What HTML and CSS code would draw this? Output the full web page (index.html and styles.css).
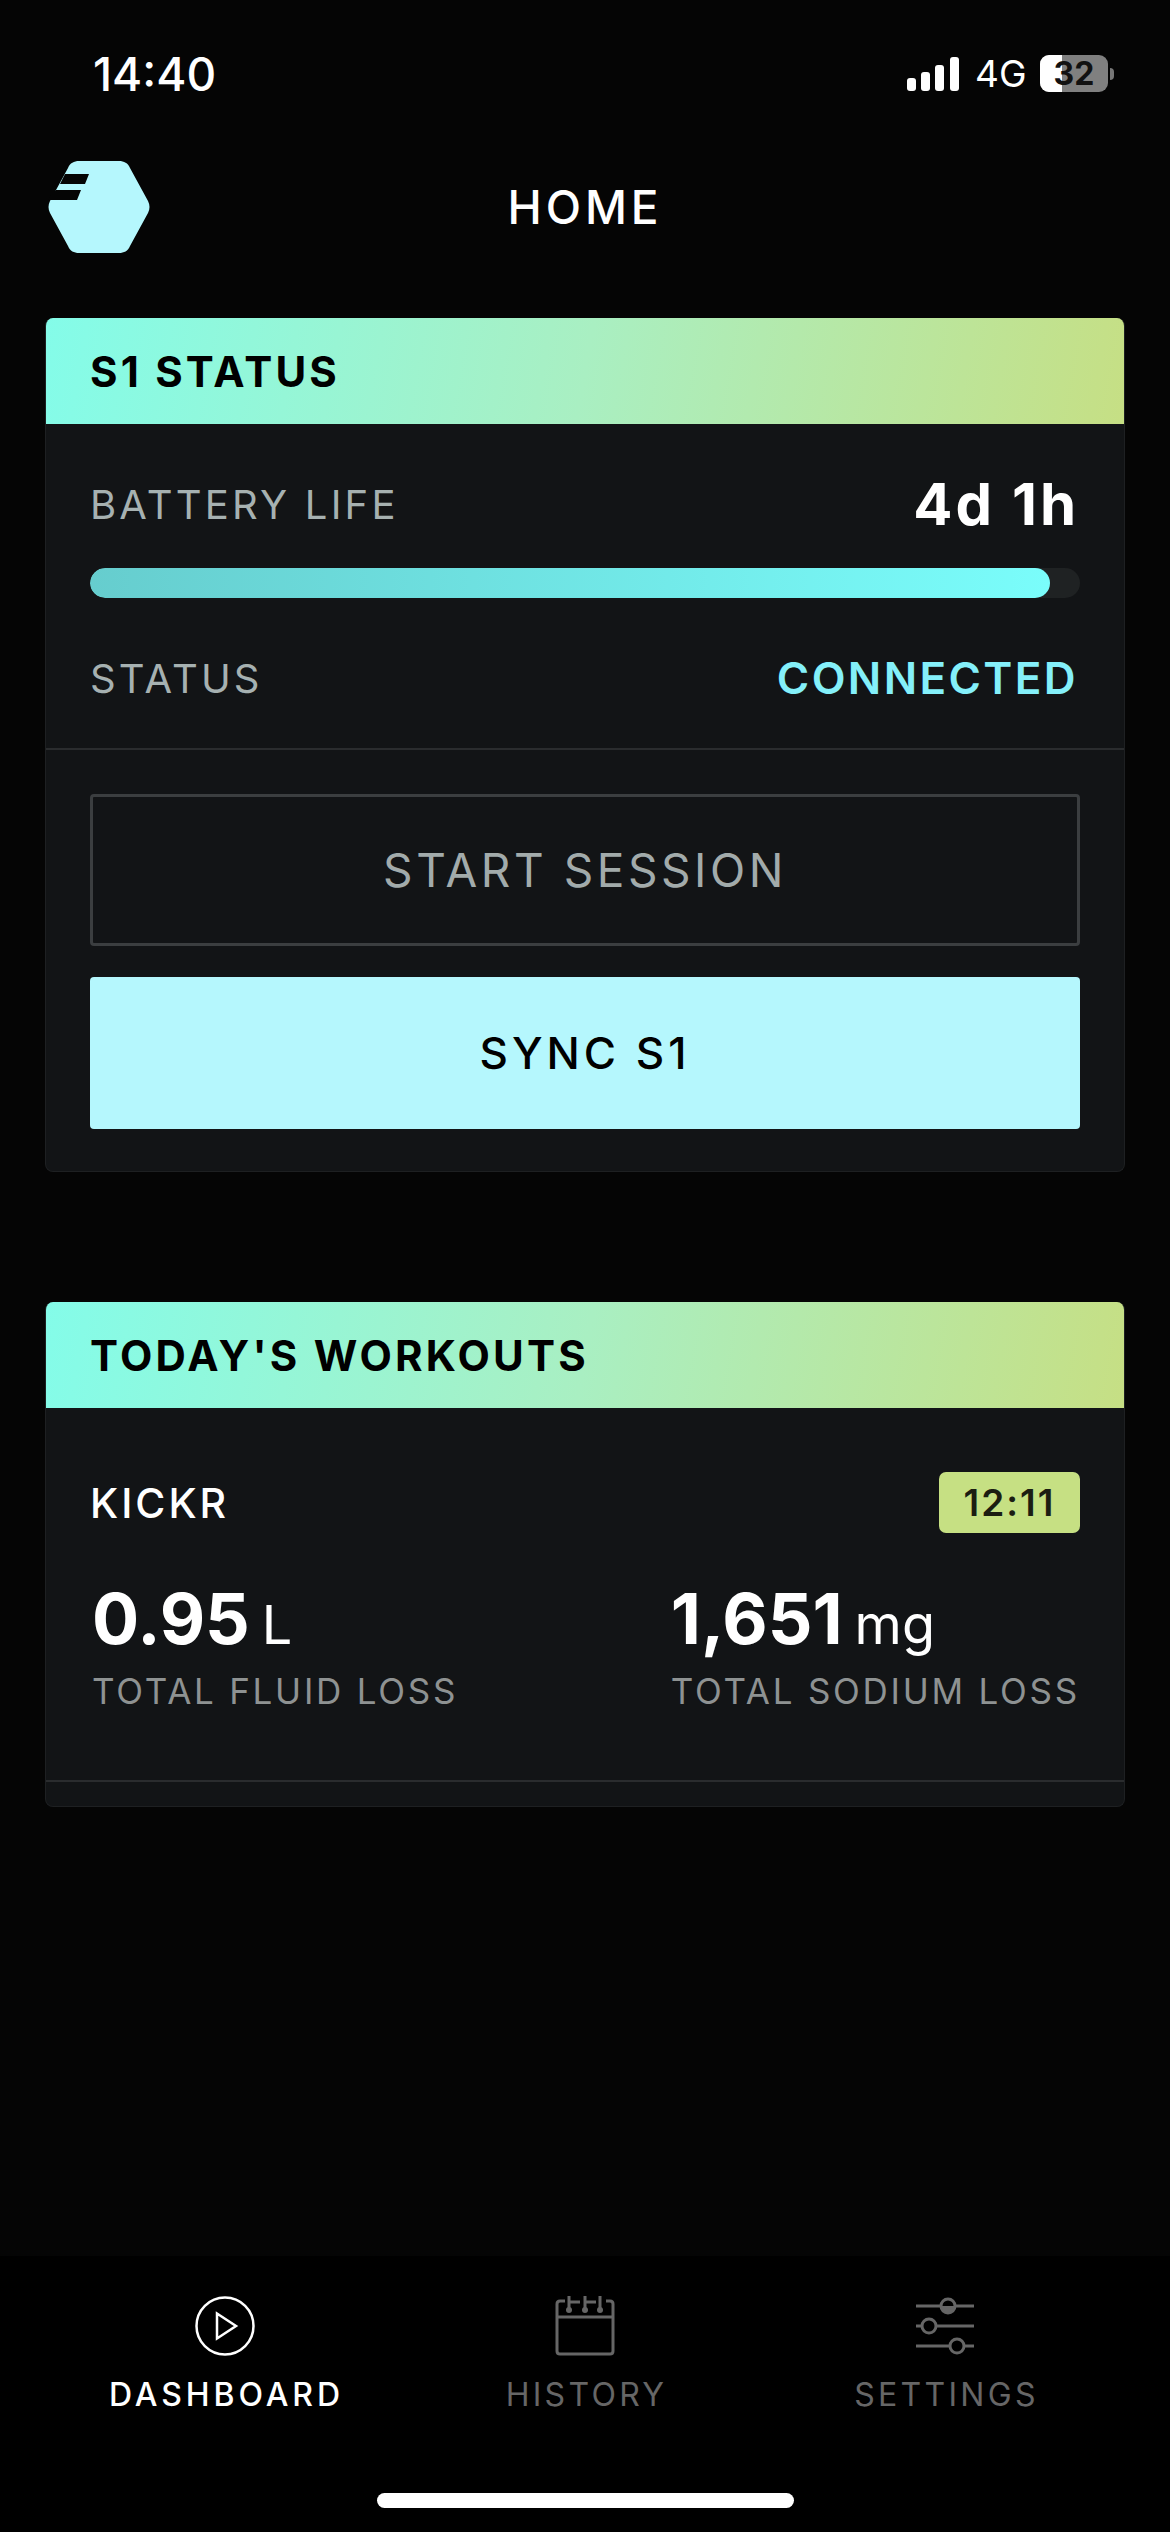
FILE: index.html
```html
<!DOCTYPE html>
<html lang="en">
<head>
  <meta charset="UTF-8">
  <link rel="stylesheet" href="styles.css">
  <title>Home</title>
</head>
<body>
  <div class="page">
    <div class="statusbar">
      <span class="clock">14:40</span>
      <div class="indicators">
        <svg class="signal" width="52" height="34" viewBox="0 0 52 34" fill="#fff">
          <rect x="0" y="21" width="9" height="13" rx="3"/>
          <rect x="14" y="15" width="9" height="19" rx="3"/>
          <rect x="28" y="8" width="9" height="26" rx="3"/>
          <rect x="43" y="0" width="9" height="34" rx="3"/>
        </svg>
        <span class="network">4G</span>
        <div class="battery"><span class="battery-fill"></span><span class="battery-num">32</span></div>
        <span class="battery-cap"></span>
      </div>
    </div>

    <header class="topbar">
      <svg class="logo" width="102" height="92" viewBox="0 0 102 92">
        <path fill="#b5f7fd" d="M31 0h40c5 0 9 2 11 7l18 33c2 4 2 8 0 12L82 85c-2 5-6 7-11 7H31c-5 0-9-2-11-7L2 52c-2-4-2-8 0-12L20 7c2-5 6-7 11-7z"/>
        <path fill="#050505" d="M17 13h24l-4 10H12zM8 29h25l-4 10H0l3-5z"/>
      </svg>
      <h1 class="title">HOME</h1>
    </header>

    <main class="content">
      <section class="card card-status">
        <h2 class="card-head">S1 STATUS</h2>
        <div class="status-info">
          <div class="row row-battery">
            <span class="label">BATTERY LIFE</span>
            <span class="battery-time">4d 1h</span>
          </div>
          <div class="track"><div class="track-fill"></div></div>
          <div class="row row-state">
            <span class="label">STATUS</span>
            <span class="connected">CONNECTED</span>
          </div>
        </div>
        <div class="actions">
          <button class="btn btn-outline">START SESSION</button>
          <button class="btn btn-solid">SYNC S1</button>
        </div>
      </section>

      <section class="card card-workouts">
        <h2 class="card-head">TODAY'S WORKOUTS</h2>
        <div class="workout">
          <div class="row">
            <span class="workout-name">KICKR</span>
            <span class="tag">12:11</span>
          </div>
          <div class="stats">
            <div class="stat">
              <div class="stat-value">0.95<small>L</small></div>
              <div class="stat-label">TOTAL FLUID LOSS</div>
            </div>
            <div class="stat">
              <div class="stat-value">1,651<small>mg</small></div>
              <div class="stat-label">TOTAL SODIUM LOSS</div>
            </div>
          </div>
        </div>
        <div class="card-foot"></div>
      </section>
    </main>

    <nav class="tabs">
      <div class="tab active">
        <svg width="60" height="60" viewBox="0 0 60 60" fill="none" stroke="#fff" stroke-width="2.5">
          <circle cx="30" cy="30" r="28.5"/>
          <path d="M22 17.5v25L41 30z"/>
        </svg>
        <span>DASHBOARD</span>
      </div>
      <div class="tab">
        <svg width="60" height="60" viewBox="0 0 60 60" fill="none" stroke="#666" stroke-width="3">
          <path d="M10 5H5q-3 0-3 3v47q0 3 3 3h50q3 0 3-3V8q0-3-3-3h-4M2 21h56M14 0v14M30 0v14M45 0v14M14 6h11M30 6h11"/>
          <circle cx="14" cy="14" r="3" fill="#666" stroke="none"/>
          <circle cx="30" cy="14" r="3" fill="#666" stroke="none"/>
          <circle cx="45" cy="14" r="3" fill="#666" stroke="none"/>
        </svg>
        <span>HISTORY</span>
      </div>
      <div class="tab">
        <svg width="60" height="60" viewBox="0 0 60 60" fill="none" stroke="#666" stroke-width="3">
          <path d="M1 10h58M1 30h6M15 30h44M1 50h36M45 50h14"/>
          <circle cx="33" cy="10" r="7" fill="#000"/>
          <path d="M26 10a7 7 0 0 0 14 0z" fill="#666" stroke="none"/>
          <circle cx="14" cy="30" r="7" fill="#000"/>
          <circle cx="42" cy="50" r="7" fill="#000"/>
        </svg>
        <span>SETTINGS</span>
      </div>
    </nav>
    <div class="home-bar"><span></span></div>
  </div>
</body>
</html>
```
FILE: styles.css
```css
*{margin:0;padding:0;box-sizing:border-box}
body{
	background:#050505;
	color:#fff;
	font-family:"Inter","Liberation Sans",sans-serif;
}
.page{
	width:1170px;
	height:2532px;
	display:flex;
	flex-direction:column;
	overflow:hidden;
}

/* status bar */
.statusbar{
	height:150px;
	padding:0 56px 0 93px;
	display:flex;
	justify-content:space-between;
	align-items:flex-start;
}
.clock{
	margin-top:47px;
	font-size:46px;
	line-height:54px;
	font-weight:500;
}
.indicators{
	margin-top:55px;
	display:flex;
	align-items:center;
	height:37px;
}
.network{
	margin-left:16px;
	font-size:37px;
	font-weight:400;
	line-height:37px;
	width:65px;
}
.battery{
	position:relative;
	width:68px;
	height:37px;
	border-radius:9px;
	background:#808080;
	overflow:hidden;
}
.battery-fill{
	position:absolute;
	left:0;
	top:0;
	bottom:0;
	width:22px;
	background:#fff;
}
.battery-num{
	position:absolute;
	left:0;
	right:0;
	top:0;
	text-align:center;
	font-size:32px;
	line-height:37px;
	font-weight:700;
	color:#111;
}
.battery-cap{
	width:4px;
	height:12px;
	margin-left:2px;
	background:#777;
	border-radius:0 6px 6px 0;
}

/* header */
.topbar{
	height:168px;
	padding:11px 0 0 48px;
	position:relative;
}
.logo{display:block}
.title{
	position:absolute;
	left:0;
	right:0;
	top:30px;
	text-align:center;
	font-size:46px;
	line-height:54px;
	font-weight:500;
	letter-spacing:4px;
}

/* cards */
.content{
	flex:1;
	padding:0 45px;
}
.card{
	background:#121416;
	border:1px solid #1e2022;
	border-top:0;
	border-radius:8px;
	overflow:hidden;
}
.card-status{height:854px;margin-bottom:130px}
.card-workouts{height:505px}
.card-head{
	height:106px;
	margin:0 -1px;
	padding-left:45px;
	display:flex;
	align-items:center;
	background:linear-gradient(100deg,#84fce9 0%,#a9efc2 50%,#c6df84 100%);
	color:#000;
	font-size:42px;
	font-weight:700;
	letter-spacing:3.2px;
}
.row{
	display:flex;
	justify-content:space-between;
	align-items:center;
}
.status-info{
	height:326px;
	padding:0 44px;
	border-bottom:2px solid #2a2c2e;
}
.row-battery{height:120px;padding-top:40px}
.label{
	font-size:40px;
	font-weight:400;
	letter-spacing:3.2px;
	color:#a6b1b1;
}
.battery-time{
	font-size:58px;
	font-weight:700;
	letter-spacing:3px;
	margin-right:1px;
}
.track{
	height:30px;
	margin-top:24px;
	border-radius:15px;
	background:#1f2223;
	overflow:hidden;
}
.track-fill{
	width:960px;
	height:100%;
	border-radius:15px;
	background:linear-gradient(90deg,#66cdce,#7afdfb);
}
.row-state{margin-top:55px;height:50px}
.connected{
	font-size:44px;
	font-weight:600;
	letter-spacing:2.4px;
	color:#84f0fa;
	margin-right:2px;
}
.actions{
	padding:44px 44px 0;
	display:flex;
	flex-direction:column;
	gap:31px;
}
.btn{
	display:block;
	width:100%;
	height:152px;
	border-radius:4px;
	font-family:inherit;
	background:none;
}
.btn-outline{
	border:3px solid #3b3e40;
	color:#a2abab;
	font-size:46px;
	font-weight:400;
	letter-spacing:3.55px;
}
.btn-solid{
	border:0;
	background:#b5f7fd;
	color:#000;
	font-size:44px;
	font-weight:500;
	letter-spacing:4px;
}

/* workout */
.workout{
	height:374px;
	padding:64px 44px 0;
	border-bottom:2px solid #2a2c2e;
}
.workout-name{
	font-size:41px;
	font-weight:500;
	letter-spacing:3px;
}
.tag{
	width:141px;
	height:61px;
	display:flex;
	align-items:center;
	justify-content:center;
	border-radius:7px;
	background:#c6e083;
	color:#1b1d12;
	font-size:37px;
	font-weight:600;
	letter-spacing:2px;
}
.stats{
	margin-top:46px;
	display:flex;
	justify-content:space-between;
}
.stat-value{
	font-size:70px;
	font-weight:700;
	line-height:80px;
	padding-left:2px;
}
.stat-value small{
	font-size:54px;
	font-weight:400;
	margin-left:12px;
}
.stat-label{
	margin-top:5px;
	padding-left:2px;
	font-size:35px;
	letter-spacing:2.75px;
	color:#8e9292;
}
.card-foot{height:24px}

/* tab bar */
.tabs{
	height:176px;
	padding:40px 45px 0;
	background:#000;
	display:grid;
	grid-template-columns:repeat(3,1fr);
}
.tab{
	display:flex;
	flex-direction:column;
	align-items:center;
	gap:20px;
	font-size:32px;
	font-weight:400;
	letter-spacing:3.3px;
	line-height:38px;
	color:#666;
}
.tab svg{display:block}
.tab span{padding-left:3px}
.tab.active{color:#fff;font-weight:500;letter-spacing:3.9px}
.home-bar{
	height:100px;
	background:#000;
	padding-top:61px;
}
.home-bar span{
	display:block;
	width:417px;
	height:15px;
	margin:0 auto;
	border-radius:8px;
	background:#fff;
}
```
